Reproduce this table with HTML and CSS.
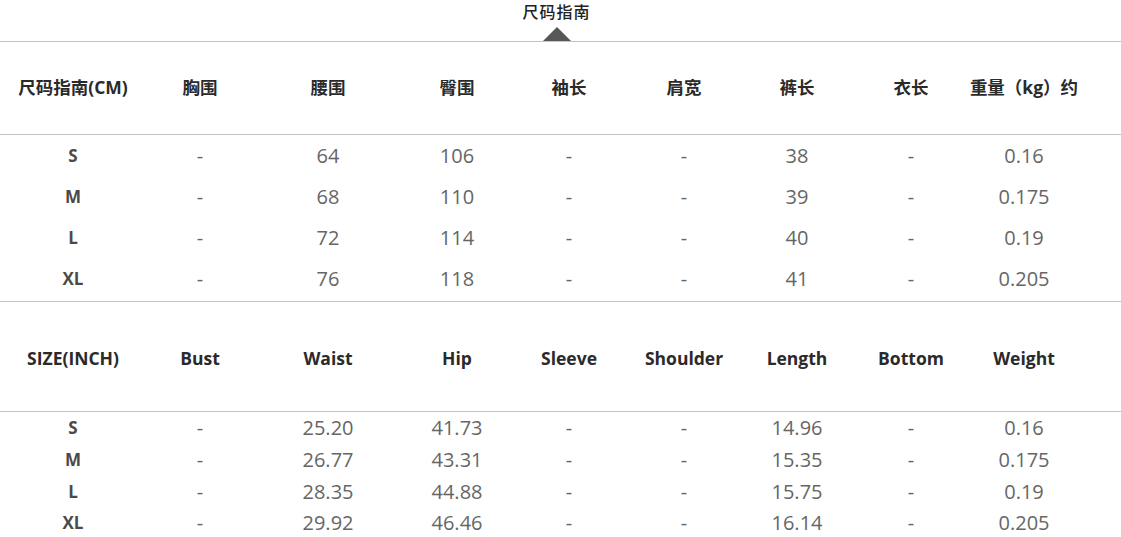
FILE: index.html
```html
<!DOCTYPE html>
<html lang="zh">
<head>
<meta charset="utf-8">
<title>尺码指南</title>
<link rel="stylesheet" href="styles.css">
</head>
<body>
<div class="page">
  <div class="title-wrap">
    <div class="title">尺码指南</div>
    <div class="arrow"></div>
  </div>

  <div class="row head cm">
    <div>尺码指南(CM)</div><div>胸围</div><div>腰围</div><div>臀围</div><div>袖长</div><div>肩宽</div><div>裤长</div><div>衣长</div><div>重量（kg）约</div>
  </div>
  <div class="body cm">
    <div class="row data"><div class="sz">S</div><div>-</div><div>64</div><div>106</div><div>-</div><div>-</div><div>38</div><div>-</div><div>0.16</div></div>
    <div class="row data"><div class="sz">M</div><div>-</div><div>68</div><div>110</div><div>-</div><div>-</div><div>39</div><div>-</div><div>0.175</div></div>
    <div class="row data"><div class="sz">L</div><div>-</div><div>72</div><div>114</div><div>-</div><div>-</div><div>40</div><div>-</div><div>0.19</div></div>
    <div class="row data"><div class="sz">XL</div><div>-</div><div>76</div><div>118</div><div>-</div><div>-</div><div>41</div><div>-</div><div>0.205</div></div>
  </div>

  <div class="row head inch">
    <div>SIZE(INCH)</div><div>Bust</div><div>Waist</div><div>Hip</div><div>Sleeve</div><div>Shoulder</div><div>Length</div><div>Bottom</div><div>Weight</div>
  </div>
  <div class="body inch">
    <div class="row data"><div class="sz">S</div><div>-</div><div>25.20</div><div>41.73</div><div>-</div><div>-</div><div>14.96</div><div>-</div><div>0.16</div></div>
    <div class="row data"><div class="sz">M</div><div>-</div><div>26.77</div><div>43.31</div><div>-</div><div>-</div><div>15.35</div><div>-</div><div>0.175</div></div>
    <div class="row data"><div class="sz">L</div><div>-</div><div>28.35</div><div>44.88</div><div>-</div><div>-</div><div>15.75</div><div>-</div><div>0.19</div></div>
    <div class="row data"><div class="sz">XL</div><div>-</div><div>29.92</div><div>46.46</div><div>-</div><div>-</div><div>16.14</div><div>-</div><div>0.205</div></div>
  </div>
</div>
</body>
</html>
```

FILE: styles.css
```css
* { box-sizing: border-box; }
html, body { margin: 0; padding: 0; background: #fff; }
body {
  font-family: "Open Sans", "Noto Sans CJK SC", sans-serif;
  color: #333;
  overflow: hidden;
}
.page { width: 1121px; }

.title-wrap {
  height: 42px;
  display: flex;
  flex-direction: column;
  align-items: center;
  border-bottom: 1px solid #c4c4c4;
  padding-right: 8px;
}
.title {
  font-family: "Noto Sans CJK SC", sans-serif;
  font-size: 16px;
  font-weight: 500;
  line-height: 20px;
  height: 27px;
  padding-top: 1px;
  color: #222;
  letter-spacing: 1px;
}
.arrow {
  width: 0;
  height: 0;
  border-left: 14.5px solid transparent;
  border-right: 14.5px solid transparent;
  border-bottom: 14px solid #575757;
}

.row {
  display: grid;
  grid-template-columns: 128px 126px 130px 128px 96px 134px 92px 136px 90px;
  padding-left: 9px;
  align-items: center;
  justify-items: center;
  text-align: center;
  white-space: nowrap;
}
.head {
  font-family: "Open Sans", "Noto Sans CJK SC", sans-serif;
  font-weight: 700;
  font-size: 17.5px;
  color: #2a2a2a;
  border-bottom: 1px solid #c4c4c4;
}
.head.cm { height: 93px; padding-bottom: 4px; }
.head.inch { height: 110px; padding-top: 2px; }

.body.cm { border-bottom: 1px solid #c4c4c4; padding-bottom: 2px; }
.body.inch { padding-top: 0; }

.data {
  font-size: 20px;
  color: #666;
}
.cm .data { height: 41px; }
.inch .data { height: 31.7px; }
.data .sz {
  font-weight: 700;
  font-size: 17px;
  color: #4a4a4a;
}
```
